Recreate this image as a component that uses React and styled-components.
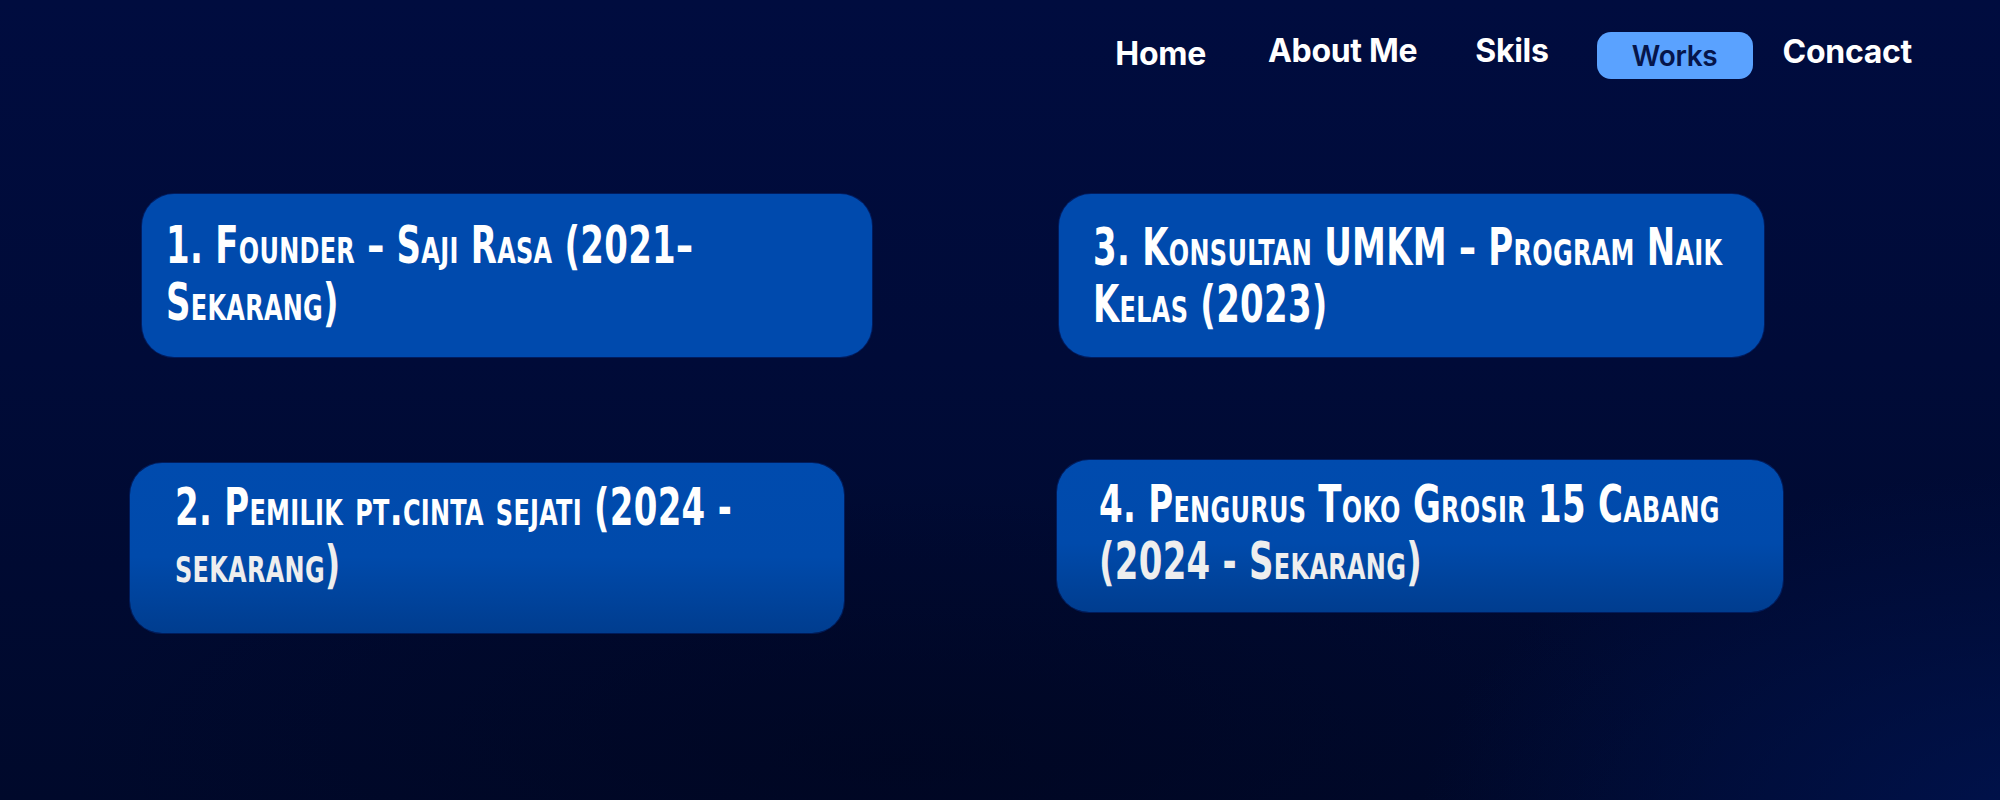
import React from "react";
import styled, { createGlobalStyle } from "styled-components";

const Global = createGlobalStyle`
  html, body { margin: 0; padding: 0; }
  body { background: #000a33; }
`;

const Page = styled.div`
  width: 2000px;
  height: 800px;
  overflow: hidden;
  background:
    radial-gradient(ellipse 900px 500px at 2050px 820px, rgba(0, 22, 90, 0.7), rgba(0, 22, 90, 0) 70%),
    radial-gradient(ellipse 1200px 400px at 900px 760px, rgba(0, 5, 30, 0.6), rgba(0, 5, 30, 0) 70%),
    linear-gradient(180deg, #000c3f 0%, #000b38 45%, #00092b 100%);
  font-family: Inter, "Liberation Sans", sans-serif;
`;

const Nav = styled.nav`
  display: flex;
  justify-content: flex-end;
  align-items: center;
  padding: 32px 88px 0 0;
  height: 47px;
`;

const NavLink = styled.a`
  color: ${(p) => (p.$active ? "#06154a" : "#ffffff")};
  background: ${(p) => (p.$active ? "#5aa2ff" : "transparent")};
  font-family: Inter, "Liberation Sans", sans-serif;
  font-weight: ${(p) => (p.$active ? 600 : 700)};
  font-size: ${(p) => (p.$active ? "28px" : "32px")};
  letter-spacing: -0.3px;
  text-decoration: none;
  border-radius: 14px;
  display: flex;
  align-items: center;
  justify-content: center;
  height: ${(p) => (p.$active ? "47px" : "auto")};
  width: ${(p) => (p.$active ? "156px" : "auto")};
  margin-left: ${(p) => p.$ml}px;
  position: relative;
  top: ${(p) => p.$dy}px;
`;

const Grid = styled.section`
  display: grid;
  grid-template-columns: 927px 1fr;
  grid-template-rows: 163px 170px;
  row-gap: 106px;
  padding: 115px 0 0 130px;
`;

const Card = styled.div`
  box-sizing: border-box;
  width: ${(p) => p.$w}px;
  height: ${(p) => p.$h}px;
  margin-left: ${(p) => p.$ml}px;
  margin-top: ${(p) => p.$mt}px;
  padding: ${(p) => p.$pt}px 20px 0 ${(p) => p.$pl}px;
  border-radius: 32px;
  background: ${(p) =>
    p.$fade
      ? "linear-gradient(180deg, #004bae 0%, #004aab 55%, #003d8f 100%)"
      : "#004aad"};
  box-shadow: 0 0 0 1px rgba(0, 40, 120, 0.6);
`;

const Title = styled.h2`
  margin: 0;
  font-family: "DejaVu Sans Condensed", "Liberation Sans Narrow", "Liberation Sans", sans-serif;
  font-weight: 700;
  font-variant: small-caps;
  font-size: 51px;
  line-height: 57px;
  letter-spacing: 0.4px;
  color: #ffffff;
  transform: scaleX(0.74);
  transform-origin: left center;
  white-space: nowrap;

  span {
    display: block;
  }
  span + span {
    color: ${(p) => (p.$fade ? "#eeeeee" : "#ffffff")};
  }
`;

const navItems = [
  { label: "Home", ml: 0, dy: -2 },
  { label: "About Me", ml: 62, dy: -5 },
  { label: "Skils", ml: 58, dy: -5 },
  { label: "Works", ml: 48, dy: 0, active: true },
  { label: "Concact", ml: 30, dy: -4 },
];

const cards = [
  {
    lines: ["1. Founder – Saji Rasa (2021–", "Sekarang)"],
    w: 730, h: 163, ml: 12, mt: 0, pt: 23, pl: 24,
  },
  {
    lines: ["3. Konsultan UMKM – Program Naik", "Kelas (2023)"],
    w: 705, h: 163, ml: 2, mt: 0, pt: 25, pl: 34,
  },
  {
    lines: ["2. Pemilik pt.cinta sejati (2024 -", "sekarang)"],
    w: 714, h: 170, ml: 0, mt: 0, pt: 16, pl: 45, fade: true,
  },
  {
    lines: ["4. Pengurus Toko Grosir 15 Cabang", "(2024 - Sekarang)"],
    w: 726, h: 152, ml: 0, mt: -3, pt: 16, pl: 42, fade: true,
  },
];

export default function App() {
  return (
    <Page>
      <Global />
      <Nav>
        {navItems.map((n) => (
          <NavLink key={n.label} href="#" $ml={n.ml} $dy={n.dy} $active={n.active}>
            {n.label}
          </NavLink>
        ))}
      </Nav>
      <Grid>
        {cards.map((c, i) => (
          <Card key={i} $w={c.w} $h={c.h} $ml={c.ml} $mt={c.mt} $pt={c.pt} $pl={c.pl} $fade={c.fade}>
            <Title $fade={c.fade}>
              {c.lines.map((l) => (
                <span key={l}>{l}</span>
              ))}
            </Title>
          </Card>
        ))}
      </Grid>
    </Page>
  );
}
